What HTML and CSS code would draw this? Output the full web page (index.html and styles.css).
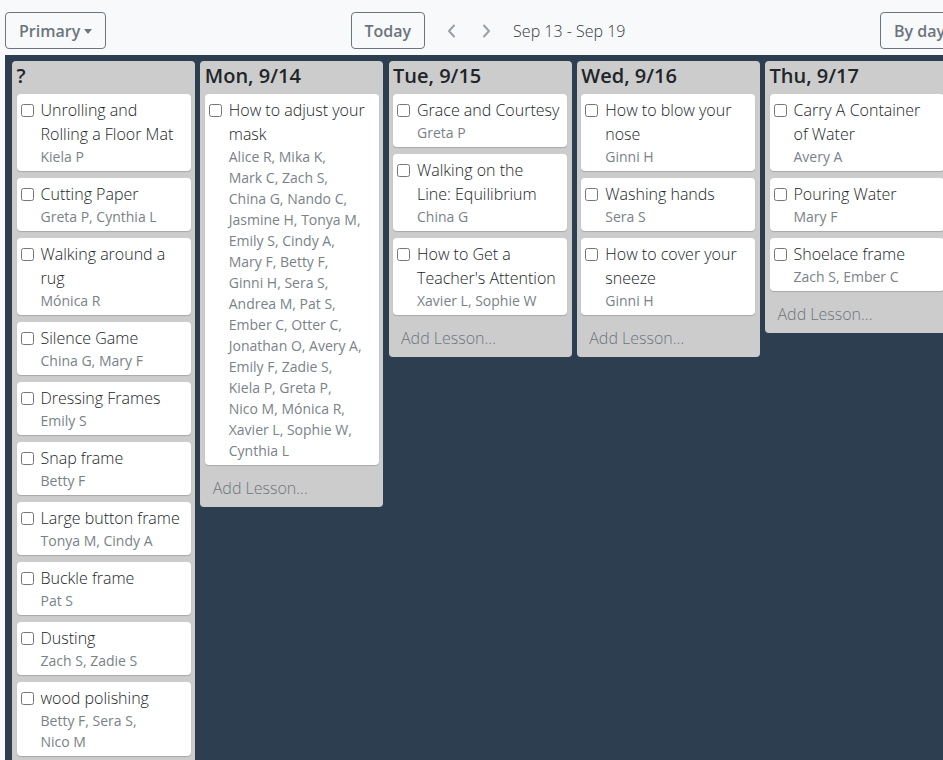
FILE: index.html
```html
<!DOCTYPE html>
<html lang="en">
<head>
<meta charset="utf-8">
<title>Lessons</title>
<link rel="stylesheet" href="styles.css">
</head>
<body>
<div class="app">
  <div class="toolbar">
    <div class="tb-left"><button class="btn dropdown">Primary</button></div>
    <div class="tb-center">
      <button class="btn">Today</button>
      <button class="nav prev" aria-label="Previous week"><svg width="9" height="14" viewBox="0 0 9 14"><polyline points="7,1.5 2,7 7,12.5" fill="none" stroke="#9aa0a6" stroke-width="2" stroke-linecap="round" stroke-linejoin="round"/></svg></button>
      <button class="nav next" aria-label="Next week"><svg width="9" height="14" viewBox="0 0 9 14"><polyline points="2,1.5 7,7 2,12.5" fill="none" stroke="#9aa0a6" stroke-width="2" stroke-linecap="round" stroke-linejoin="round"/></svg></button>
      <span class="range">Sep 13 - Sep 19</span>
    </div>
    <div class="tb-right"><button class="btn dropdown">By day</button></div>
  </div>

  <div class="board">
    <div class="column">
      <div class="col-head">?</div>
      <div class="card"><input type="checkbox"><div class="body"><div class="title">Unrolling and Rolling a Floor Mat</div><div class="names"><span>Kiela P</span></div></div></div>
      <div class="card"><input type="checkbox"><div class="body"><div class="title">Cutting Paper</div><div class="names"><span>Greta P,</span> <span>Cynthia L</span></div></div></div>
      <div class="card"><input type="checkbox"><div class="body"><div class="title">Walking around a rug</div><div class="names"><span>Mónica R</span></div></div></div>
      <div class="card"><input type="checkbox"><div class="body"><div class="title">Silence Game</div><div class="names"><span>China G,</span> <span>Mary F</span></div></div></div>
      <div class="card"><input type="checkbox"><div class="body"><div class="title">Dressing Frames</div><div class="names"><span>Emily S</span></div></div></div>
      <div class="card"><input type="checkbox"><div class="body"><div class="title">Snap frame</div><div class="names"><span>Betty F</span></div></div></div>
      <div class="card"><input type="checkbox"><div class="body"><div class="title">Large button frame</div><div class="names"><span>Tonya M,</span> <span>Cindy A</span></div></div></div>
      <div class="card"><input type="checkbox"><div class="body"><div class="title">Buckle frame</div><div class="names"><span>Pat S</span></div></div></div>
      <div class="card"><input type="checkbox"><div class="body"><div class="title">Dusting</div><div class="names"><span>Zach S,</span> <span>Zadie S</span></div></div></div>
      <div class="card"><input type="checkbox"><div class="body"><div class="title">wood polishing</div><div class="names"><span>Betty F,</span> <span>Sera S,</span> <span>Nico M</span></div></div></div>
      <div class="card"><input type="checkbox"><div class="body"><div class="title">Table washing</div><div class="names"><span>Otter C</span></div></div></div>
      <div class="add">Add Lesson...</div>
    </div>

    <div class="column">
      <div class="col-head">Mon, 9/14</div>
      <div class="card"><input type="checkbox"><div class="body"><div class="title">How to adjust your mask</div><div class="names"><span>Alice R,</span> <span>Mika K,</span> <span>Mark C,</span> <span>Zach S,</span> <span>China G,</span> <span>Nando C,</span> <span>Jasmine H,</span> <span>Tonya M,</span> <span>Emily S,</span> <span>Cindy A,</span> <span>Mary F,</span> <span>Betty F,</span> <span>Ginni H,</span> <span>Sera S,</span> <span>Andrea M,</span> <span>Pat S,</span> <span>Ember C,</span> <span>Otter C,</span> <span>Jonathan O,</span> <span>Avery A,</span> <span>Emily F,</span> <span>Zadie S,</span> <span>Kiela P,</span> <span>Greta P,</span> <span>Nico M,</span> <span>Mónica R,</span> <span>Xavier L,</span> <span>Sophie W,</span> <span>Cynthia L</span></div></div></div>
      <div class="add">Add Lesson...</div>
    </div>

    <div class="column">
      <div class="col-head">Tue, 9/15</div>
      <div class="card"><input type="checkbox"><div class="body"><div class="title">Grace and Courtesy</div><div class="names"><span>Greta P</span></div></div></div>
      <div class="card"><input type="checkbox"><div class="body"><div class="title">Walking on the Line: Equilibrium</div><div class="names"><span>China G</span></div></div></div>
      <div class="card"><input type="checkbox"><div class="body"><div class="title">How to Get a Teacher's Attention</div><div class="names"><span>Xavier L,</span> <span>Sophie W</span></div></div></div>
      <div class="add">Add Lesson...</div>
    </div>

    <div class="column">
      <div class="col-head">Wed, 9/16</div>
      <div class="card"><input type="checkbox"><div class="body"><div class="title">How to blow your nose</div><div class="names"><span>Ginni H</span></div></div></div>
      <div class="card"><input type="checkbox"><div class="body"><div class="title">Washing hands</div><div class="names"><span>Sera S</span></div></div></div>
      <div class="card"><input type="checkbox"><div class="body"><div class="title">How to cover your sneeze</div><div class="names"><span>Ginni H</span></div></div></div>
      <div class="add">Add Lesson...</div>
    </div>

    <div class="column">
      <div class="col-head">Thu, 9/17</div>
      <div class="card"><input type="checkbox"><div class="body"><div class="title">Carry A Container of Water</div><div class="names"><span>Avery A</span></div></div></div>
      <div class="card"><input type="checkbox"><div class="body"><div class="title">Pouring Water</div><div class="names"><span>Mary F</span></div></div></div>
      <div class="card"><input type="checkbox"><div class="body"><div class="title">Shoelace frame</div><div class="names"><span>Zach S,</span> <span>Ember C</span></div></div></div>
      <div class="add">Add Lesson...</div>
    </div>

    <div class="column">
      <div class="col-head">Fri, 9/18</div>
      <div class="add">Add Lesson...</div>
    </div>
  </div>
</div>
</body>
</html>
```

FILE: styles.css
```css
html, body {
  margin: 0;
  padding: 0;
  overflow: hidden;
}

body {
  background: #f8f9fa;
  font-family: "Open Sans", "Liberation Sans", sans-serif;
  font-weight: 300;
  color: #212529;
}

.app {
  padding: 12px 0 0 5px;
}

.toolbar {
  width: 966px;
  display: grid;
  grid-template-columns: 1fr auto 1fr;
  align-items: center;
  height: 37px;
}

.tb-right {
  justify-self: end;
}

.tb-center {
  display: flex;
  align-items: center;
}

.btn {
  box-sizing: border-box;
  height: 37px;
  padding: 0 13px;
  border: 1px solid #6c757d;
  border-radius: 4px;
  background: transparent;
  color: #6c757d;
  font-family: "Open Sans", "Liberation Sans", sans-serif;
  font-weight: 600;
  font-size: 16px;
  line-height: 24px;
  cursor: pointer;
}

.dropdown::after {
  content: "";
  display: inline-block;
  margin-left: 4px;
  vertical-align: 3px;
  border-top: 5px solid #6c757d;
  border-left: 4.5px solid transparent;
  border-right: 4.5px solid transparent;
}

.nav {
  background: none;
  border: none;
  padding: 0;
  margin: 0;
  width: 9px;
  height: 20px;
  display: flex;
  align-items: center;
  justify-content: center;
}

.prev {
  margin-left: 22px;
}

.next {
  margin-left: 26px;
}

.range {
  margin-left: 22px;
  font-size: 16px;
  font-weight: 300;
  color: #343a40;
}

.board {
  margin-top: 6px;
  background: #2c3e50;
  display: flex;
  align-items: flex-start;
  gap: 5.25px;
  width: max-content;
  min-height: 760px;
  padding: 6px 20px 0 7px;
}

.column {
  width: 183px;
  box-sizing: border-box;
  background: #cccccc;
  border-radius: 4px;
  padding: 0 4.5px;
}

.col-head {
  padding: 1px 0 0 0;
  height: 33px;
  box-sizing: border-box;
  font-size: 20px;
  line-height: 27px;
  font-weight: 600;
  color: #212529;
}

.card {
  display: flex;
  align-items: flex-start;
  background: #ffffff;
  border-radius: 4px;
  box-shadow: 0 1px 1px rgba(0, 0, 0, 0.18);
  padding: 4px 6px 4px 4px;
  margin-bottom: 7px;
}

.card input {
  flex: none;
  width: 13px;
  height: 13px;
  margin: 6px 7px 0 0;
}

.body {
  flex: 1;
  min-width: 0;
}

.title {
  font-size: 16px;
  line-height: 24px;
  color: #212529;
}

.names {
  font-size: 14px;
  line-height: 21px;
  font-weight: 400;
  color: #7a8288;
  padding-right: 8px;
}

.names span {
  white-space: nowrap;
}

.add {
  padding: 4px 8px 7px 8px;
  font-size: 16px;
  line-height: 24px;
  color: #6c757d;
}
```
